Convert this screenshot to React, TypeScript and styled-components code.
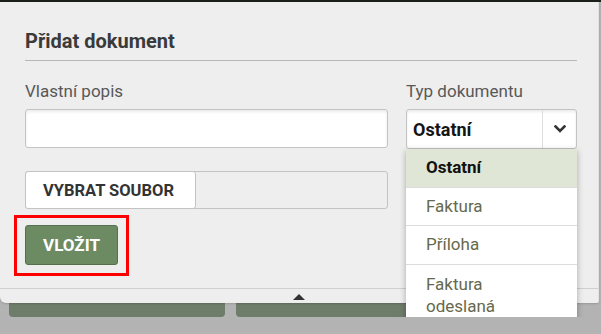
import React from "react";
import styled, { createGlobalStyle } from "styled-components";

const Global = createGlobalStyle`
  html, body { margin: 0; padding: 0; }
  body {
    background: #b3b3b3;
    font-family: Roboto, "Liberation Sans", sans-serif;
    overflow: hidden;
  }
  * { box-sizing: border-box; }
`;

const TopBar = styled.div`
  height: 2px;
  background: #1b1f19;
`;

const Modal = styled.div`
  width: 599px;
  height: 301px;
  background: #eeeeee;
  border-right: 1px solid #e2e2e2;
  border-bottom-left-radius: 6px;
  border-bottom-right-radius: 2px;
  position: relative;
  z-index: 2;
  display: flex;
  flex-direction: column;
  box-shadow: 0 1px 2px rgba(0, 0, 0, 0.15);
`;

const Body = styled.div`
  padding: 0 21px 0 25px;
  flex: 1;
  display: flex;
  flex-direction: column;
`;

const Title = styled.h2`
  margin: 0;
  padding: 28px 0 7px;
  font-size: 20px;
  font-weight: 700;
  color: #3a3a3a;
  line-height: 23px;
  border-bottom: 1px solid #b7b7b7;
`;

const FieldsRow = styled.div`
  display: grid;
  grid-template-columns: 363px 1fr;
  column-gap: 18px;
  margin-top: 20px;
`;

const Field = styled.div`
  display: flex;
  flex-direction: column;
`;

const Label = styled.label`
  font-size: 17px;
  color: #585858;
  line-height: 20px;
  height: 28px;
`;

const TextInput = styled.input`
  height: 39px;
  border: 1px solid #c3c3c3;
  border-radius: 3px;
  background: #fff;
  box-shadow: inset 0 2px 3px rgba(0, 0, 0, 0.08);
  outline: none;
  font: inherit;
  padding: 0 8px;
`;

const SelectWrap = styled.div`
  position: relative;
`;

const SelectBox = styled.div`
  height: 40px;
  border: 1px solid #c3c3c3;
  border-radius: 3px;
  background: #fff;
  box-shadow: inset 0 2px 3px rgba(0, 0, 0, 0.08);
  display: flex;
  align-items: stretch;
`;

const SelectValue = styled.div`
  flex: 1;
  display: flex;
  align-items: center;
  padding-left: 6px;
  font-size: 18px;
  font-weight: 700;
  color: #151515;
`;

const Caret = styled.div`
  width: 34px;
  border-left: 1px solid #dedede;
  display: flex;
  align-items: center;
  justify-content: center;
  color: #333;
`;

const Menu = styled.ul`
  position: absolute;
  left: 0;
  right: 0;
  top: 100%;
  margin: 0;
  padding: 0;
  list-style: none;
  background: #fff;
  border-radius: 0 0 3px 3px;
  box-shadow: 0 2px 6px rgba(0, 0, 0, 0.3);
  z-index: 5;
`;

const MenuItem = styled.li<{ $active?: boolean }>`
  padding: 8px 19px 6px 20px;
  min-height: 38px;
  font-size: 17px;
  line-height: 21.5px;
  border-top: ${(p) => (p.$active ? "none" : "1px solid #dcdcdc")};
  background: ${(p) => (p.$active ? "#dfe6d5" : "#fff")};
  color: ${(p) => (p.$active ? "#111" : "#66694b")};
  font-weight: ${(p) => (p.$active ? 700 : 400)};
  &:nth-child(3) { min-height: 39px; }
  &:last-child { padding-top: 9px; border-radius: 0 0 3px 3px; }
`;

const FileRow = styled.div`
  margin-top: 22px;
  width: 363px;
  height: 38px;
  border: 1px solid #c3c3c3;
  border-radius: 3px;
  background: #eeeeee;
  display: flex;
`;

const FileButton = styled.div`
  width: 171px;
  margin: -1px 0 -1px -1px;
  border: 1px solid #c3c3c3;
  border-radius: 3px;
  background: #fff;
  display: flex;
  align-items: center;
  padding-left: 17px;
  font-size: 16.5px;
  font-weight: 700;
  color: #333;
`;

const Highlight = styled.div`
  margin: 6px 0 0 -11px;
  width: 115px;
  height: 61px;
  border: 3px solid #ff0000;
  padding: 7px 0 0 8px;
`;

const SubmitButton = styled.button`
  width: 93px;
  height: 40px;
  background: #6d8b63;
  border: 1px solid #56704e;
  border-radius: 3px;
  color: #fff;
  font: inherit;
  font-size: 17px;
  font-weight: 700;
  padding: 0;
`;

const Footer = styled.div`
  height: 15px;
  border-top: 1px solid #cfcfcf;
  display: flex;
  justify-content: center;
  align-items: center;
  padding-top: 1px;
`;

const Behind = styled.div`
  display: flex;
  gap: 11px;
  padding: 0 9px;
`;

const GhostButton = styled.div<{ $w: number }>`
  width: ${(p) => p.$w}px;
  height: 14px;
  background: #6e7c6a;
  border-radius: 0 0 4px 4px;
`;

export default function App() {
  return (
    <>
      <Global />
      <TopBar />
      <Modal>
        <Body>
          <Title>Přidat dokument</Title>
          <FieldsRow>
            <Field>
              <Label>Vlastní popis</Label>
              <TextInput />
            </Field>
            <Field>
              <Label>Typ dokumentu</Label>
              <SelectWrap>
                <SelectBox>
                  <SelectValue>Ostatní</SelectValue>
                  <Caret>
                    <svg width="12" height="8" viewBox="0 0 12 8">
                      <polyline points="1.5,1.5 6,6 10.5,1.5" fill="none" stroke="#333" strokeWidth="2.6" strokeLinecap="square" />
                    </svg>
                  </Caret>
                </SelectBox>
                <Menu>
                  <MenuItem $active>Ostatní</MenuItem>
                  <MenuItem>Faktura</MenuItem>
                  <MenuItem>Příloha</MenuItem>
                  <MenuItem>Faktura<br />odeslaná</MenuItem>
                </Menu>
              </SelectWrap>
            </Field>
          </FieldsRow>
          <FileRow>
            <FileButton>VYBRAT SOUBOR</FileButton>
          </FileRow>
          <Highlight>
            <SubmitButton>VLOŽIT</SubmitButton>
          </Highlight>
        </Body>
        <Footer>
          <svg width="12" height="6" viewBox="0 0 12 6">
            <polygon points="0,6 6,0 12,6" fill="#333" />
          </svg>
        </Footer>
      </Modal>
      <Behind>
        <GhostButton $w={216} />
        <GhostButton $w={330} />
      </Behind>
    </>
  );
}
